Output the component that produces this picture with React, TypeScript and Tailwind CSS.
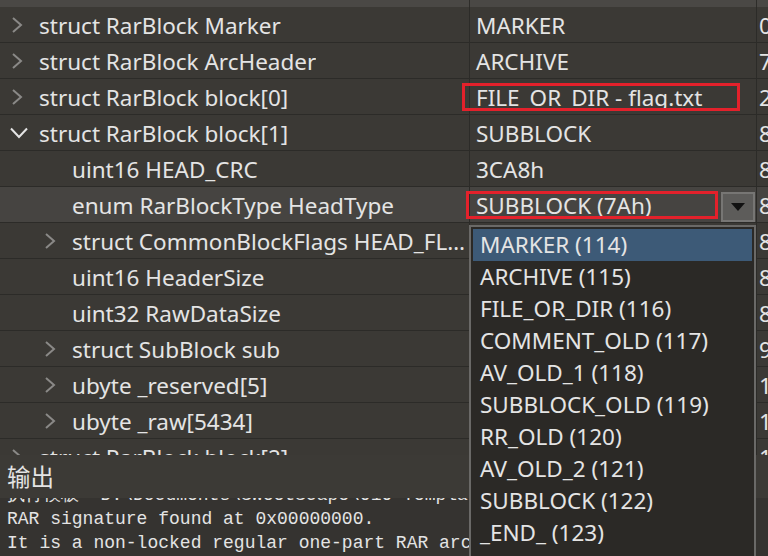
import React from 'react';

type Row = {
  level: number;
  chevron: 'none' | 'right' | 'down';
  name: string;
  value: string;
  start: string;
  selected?: boolean;
};

const rows: Row[] = [
  { level: 0, chevron: 'right', name: 'struct RarBlock Marker', value: 'MARKER', start: '0' },
  { level: 0, chevron: 'right', name: 'struct RarBlock ArcHeader', value: 'ARCHIVE', start: '7' },
  { level: 0, chevron: 'right', name: 'struct RarBlock block[0]', value: 'FILE_OR_DIR - flag.txt', start: '2' },
  { level: 0, chevron: 'down', name: 'struct RarBlock block[1]', value: 'SUBBLOCK', start: '8' },
  { level: 1, chevron: 'none', name: 'uint16 HEAD_CRC', value: '3CA8h', start: '8' },
  { level: 1, chevron: 'none', name: 'enum RarBlockType HeadType', value: 'SUBBLOCK (7Ah)', start: '8', selected: true },
  { level: 1, chevron: 'right', name: 'struct CommonBlockFlags HEAD_FLAGS', value: '', start: '8' },
  { level: 1, chevron: 'none', name: 'uint16 HeaderSize', value: '', start: '8' },
  { level: 1, chevron: 'none', name: 'uint32 RawDataSize', value: '', start: '8' },
  { level: 1, chevron: 'right', name: 'struct SubBlock sub', value: '', start: '9' },
  { level: 1, chevron: 'right', name: 'ubyte _reserved[5]', value: '', start: '1' },
  { level: 1, chevron: 'right', name: 'ubyte _raw[5434]', value: '', start: '1' },
  { level: 0, chevron: 'right', name: 'struct RarBlock block[2]', value: '', start: '1' },
];

const options = [
  'MARKER (114)',
  'ARCHIVE (115)',
  'FILE_OR_DIR (116)',
  'COMMENT_OLD (117)',
  'AV_OLD_1 (118)',
  'SUBBLOCK_OLD (119)',
  'RR_OLD (120)',
  'AV_OLD_2 (121)',
  'SUBBLOCK (122)',
  '_END_ (123)',
];

const Chevron = ({ kind }: { kind: Row['chevron'] }) => {
  if (kind === 'down') {
    return (
      <svg width="18" height="12" viewBox="0 0 18 12" className="shrink-0">
        <path d="M1 1.5 L9 10 L17 1.5" fill="none" stroke="#e4e4e4" strokeWidth="2" />
      </svg>
    );
  }
  if (kind === 'right') {
    return (
      <svg width="18" height="16" viewBox="0 0 18 16" className="shrink-0">
        <path d="M3 1 L11 8 L3 15" fill="none" stroke="#8a8987" strokeWidth="2" />
      </svg>
    );
  }
  return <span className="w-[18px] shrink-0" />;
};

export default function App() {
  return (
    <div className="relative w-[768px] h-[556px] overflow-hidden bg-[#3b3935] text-[#e4e4e4] font-['Noto_Sans',sans-serif]">
      {/* header strip */}
      <div className="grid grid-cols-[470px_287px_1fr] h-[7px] bg-[#4a4845]">
        <div className="border-r border-[#2e2d2a]" />
        <div className="border-r border-[#2e2d2a]" />
        <div />
      </div>

      {/* tree */}
      <div className="h-[448px] overflow-hidden">
        {rows.map((r, i) => (
          <div
            key={i}
            className={`grid grid-cols-[470px_287px_1fr] h-[36px] border-b border-[#2c2b28] text-[22.5px] ${
              r.selected ? 'bg-[#464441]' : ''
            }`}
          >
            <div
              className={`flex items-center gap-[11px] border-r border-[#2c2b28] min-w-0 pr-[4px] ${
                r.level === 0 ? 'pl-[10px]' : 'pl-[43px]'
              }`}
            >
              <Chevron kind={r.chevron} />
              <span className="truncate leading-[30px] pt-[2px]">{r.name}</span>
            </div>
            <div className="flex items-center border-r border-[#2c2b28] pl-[6px]">
              <span className="leading-[30px] pt-[2px] whitespace-nowrap">{r.value}</span>
              {r.selected && (
                <div className="ml-auto mr-[1px] w-[34px] h-[30px] mt-[4px] bg-[#5d5c5a] border-2 border-[#777674] flex items-center justify-center">
                  <svg width="14" height="8" viewBox="0 0 14 8">
                    <path d="M0 0 H14 L7 8 Z" fill="#111" />
                  </svg>
                </div>
              )}
            </div>
            <div className="flex items-center pl-[2px] overflow-hidden">
              <span className="leading-[30px] pt-[2px]">{r.start}</span>
            </div>
          </div>
        ))}
      </div>

      {/* output panel */}
      <div className="h-[101px] bg-[#3c3a36]">
        <div className="h-[43px] flex items-center pl-[7px] text-[23.5px] font-['Noto_Sans_CJK_SC',sans-serif]">
          输出
        </div>
        <div className="h-[58px] overflow-hidden bg-[#353330] font-['Liberation_Mono',monospace] text-[18px] leading-[24px] pl-[7px] whitespace-nowrap">
          <div className="-mt-[15px]">
            <div>执行模板 'D:\Documents\SweetScape\010 Templates\RAR.bt'</div>
            <div>RAR signature found at 0x00000000.</div>
            <div>It is a non-locked regular one-part RAR archive.</div>
          </div>
        </div>
      </div>

      {/* annotation boxes */}
      <div className="absolute left-[462px] top-[83px] w-[278px] h-[28px] border-[3px] border-[#e3212b]" />
      <div className="absolute left-[466px] top-[191px] w-[252px] h-[28px] border-[3px] border-[#e3212b]" />

      {/* dropdown list */}
      <div className="absolute left-[469px] top-[225px] w-[287px] h-[340px] bg-[#2b2926] border-2 border-[#6a6967] p-[2px] text-[22.5px]">
        {options.map((o, i) => (
          <div
            key={o}
            className={`h-[32px] flex items-center pl-[7px] leading-[30px] ${i === 0 ? 'bg-[#3d5a77]' : ''}`}
          >
            {o}
          </div>
        ))}
      </div>
    </div>
  );
}
